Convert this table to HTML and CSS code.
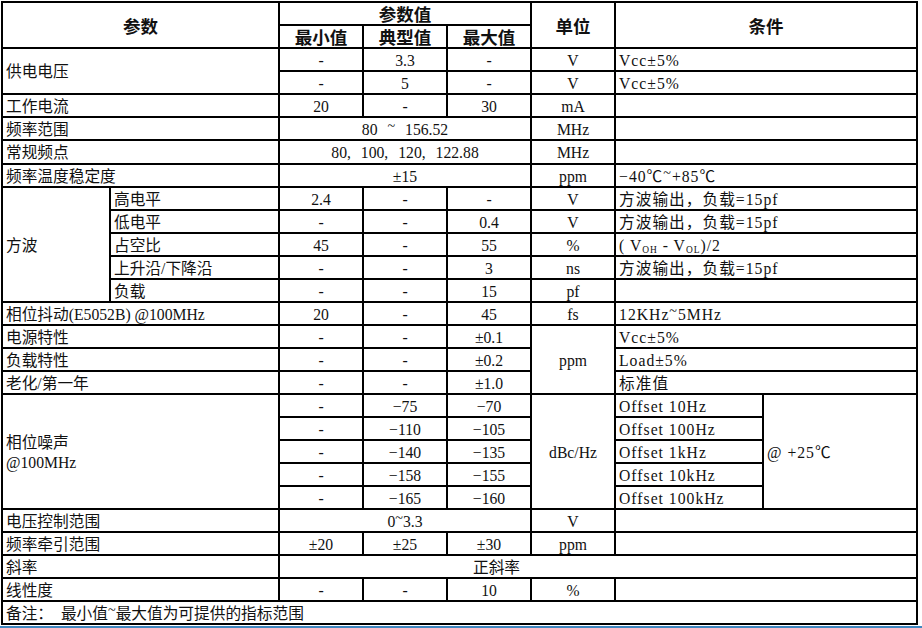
FILE: index.html
```html
<!DOCTYPE html>
<html lang="zh-CN">
<head>
<meta charset="utf-8">
<title>参数表</title>
<link rel="stylesheet" href="styles.css">
</head>
<body>
<div class="sheet">
<table class="spec">
<colgroup>
<col class="c-a"><col class="c-b"><col class="c-v"><col class="c-v"><col class="c-v"><col class="c-u"><col class="c-k1"><col class="c-k2">
</colgroup>
<thead>
<tr class="h1">
<th colspan="2" rowspan="2">参数</th>
<th colspan="3">参数值</th>
<th rowspan="2">单位</th>
<th colspan="2" rowspan="2">条件</th>
</tr>
<tr class="h2"><th>最小值</th><th>典型值</th><th>最大值</th></tr>
</thead>
<tbody>
<tr><td class="lbl" colspan="2" rowspan="2">供电电压</td><td>-</td><td>3.3</td><td>-</td><td>V</td><td class="cond" colspan="2">Vcc±5%</td></tr>
<tr><td>-</td><td>5</td><td>-</td><td>V</td><td class="cond" colspan="2">Vcc±5%</td></tr>
<tr><td class="lbl" colspan="2">工作电流</td><td>20</td><td>-</td><td>30</td><td>mA</td><td colspan="2"></td></tr>
<tr><td class="lbl" colspan="2">频率范围</td><td colspan="3" class="wide">80 <span class="t">~</span> 156.52</td><td>MHz</td><td colspan="2"></td></tr>
<tr class="r24"><td class="lbl" colspan="2">常规频点</td><td colspan="3" class="wide">80, 100, 120, 122.88</td><td>MHz</td><td colspan="2"></td></tr>
<tr><td class="lbl" colspan="2">频率温度稳定度</td><td colspan="3">±15</td><td>ppm</td><td class="cond" colspan="2">−40℃<span class="t">~</span>+85℃</td></tr>
<tr><td class="lbl" rowspan="5">方波</td><td class="lbl">高电平</td><td>2.4</td><td>-</td><td>-</td><td>V</td><td class="cond" colspan="2">方波输出，负载=15pf</td></tr>
<tr><td class="lbl">低电平</td><td>-</td><td>-</td><td>0.4</td><td>V</td><td class="cond" colspan="2">方波输出，负载=15pf</td></tr>
<tr><td class="lbl">占空比</td><td>45</td><td>-</td><td>55</td><td>%</td><td class="cond" colspan="2">( V<sub>OH</sub> - V<sub>OL</sub>)/2</td></tr>
<tr><td class="lbl">上升沿/下降沿</td><td>-</td><td>-</td><td>3</td><td>ns</td><td class="cond" colspan="2">方波输出，负载=15pf</td></tr>
<tr><td class="lbl">负载</td><td>-</td><td>-</td><td>15</td><td>pf</td><td colspan="2"></td></tr>
<tr><td class="lbl" colspan="2">相位抖动(E5052B) @100MHz</td><td>20</td><td>-</td><td>45</td><td>fs</td><td class="cond" colspan="2">12KHz<span class="t">~</span>5MHz</td></tr>
<tr><td class="lbl" colspan="2">电源特性</td><td>-</td><td>-</td><td>±0.1</td><td rowspan="3">ppm</td><td class="cond" colspan="2">Vcc±5%</td></tr>
<tr><td class="lbl" colspan="2">负载特性</td><td>-</td><td>-</td><td>±0.2</td><td class="cond" colspan="2">Load±5%</td></tr>
<tr><td class="lbl" colspan="2">老化/第一年</td><td>-</td><td>-</td><td>±1.0</td><td class="cond" colspan="2">标准值</td></tr>
<tr><td class="lbl two" colspan="2" rowspan="5">相位噪声<br>@100MHz</td><td>-</td><td>−75</td><td>−70</td><td rowspan="5">dBc/Hz</td><td class="cond">Offset 10Hz</td><td class="cond" rowspan="5">@ +25℃</td></tr>
<tr><td>-</td><td>−110</td><td>−105</td><td class="cond">Offset 100Hz</td></tr>
<tr><td>-</td><td>−140</td><td>−135</td><td class="cond">Offset 1kHz</td></tr>
<tr><td>-</td><td>−158</td><td>−155</td><td class="cond">Offset 10kHz</td></tr>
<tr><td>-</td><td>−165</td><td>−160</td><td class="cond">Offset 100kHz</td></tr>
<tr><td class="lbl" colspan="2">电压控制范围</td><td colspan="3">0<span class="t">~</span>3.3</td><td>V</td><td colspan="2"></td></tr>
<tr><td class="lbl" colspan="2">频率牵引范围</td><td>±20</td><td>±25</td><td>±30</td><td>ppm</td><td colspan="2"></td></tr>
<tr><td class="lbl" colspan="2">斜率</td><td colspan="6" class="slope">正斜率</td></tr>
<tr><td class="lbl" colspan="2">线性度</td><td>-</td><td>-</td><td>10</td><td>%</td><td colspan="2"></td></tr>
<tr><td class="lbl" colspan="8">备注：&nbsp;&nbsp;最小值<span class="t">~</span>最大值为可提供的指标范围</td></tr>
</tbody>
</table>
<div class="bar"></div>
</div>
</body>
</html>
```
FILE: styles.css
```css
* { box-sizing: border-box; }
html, body { margin: 0; padding: 0; background: #fff; }
body {
  font-family: "Liberation Serif", "Noto Sans CJK SC", serif;
  color: #111;
}
.sheet { width: 922px; height: 628px; overflow: hidden; }
.spec {
  border-collapse: collapse;
  table-layout: fixed;
  width: 917px;
  margin: 1px 0 0 1px;
  font-size: 15.7px;
}
.c-a { width: 108px; }
.c-b { width: 169px; }
.c-v { width: 84px; }
.c-u { width: 84px; }
.c-k1 { width: 148px; }
.c-k2 { width: 154px; }
.spec tr { height: 23px; }
.spec tr.r24 { height: 24px; }
.spec th, .spec td {
  border: 2px solid #000;
  padding: 0;
  text-align: center;
  vertical-align: middle;
  line-height: 18px;
  white-space: nowrap;
  overflow: hidden;
}
.spec td { padding-top: 2px; }
.spec th {
  font-family: "Noto Sans CJK SC", sans-serif;
  font-weight: 700;
  font-size: 17.5px;
  line-height: 19px;
}
.lbl { text-align: left !important; padding-left: 3px !important; }
.cond { text-align: left !important; padding-left: 3px !important; letter-spacing: 1px; }
.two { line-height: 20px !important; }
.wide { word-spacing: 6px; }
.slope { text-align: left !important; padding-left: 193px !important; }
.t { vertical-align: 0.3em; font-size: 0.9em; line-height: 0; }
sub { font-size: 0.6em; vertical-align: -0.2em; line-height: 0; }
.bar { height: 2px; margin-top: 1px; background: #3f87c0; }
```
